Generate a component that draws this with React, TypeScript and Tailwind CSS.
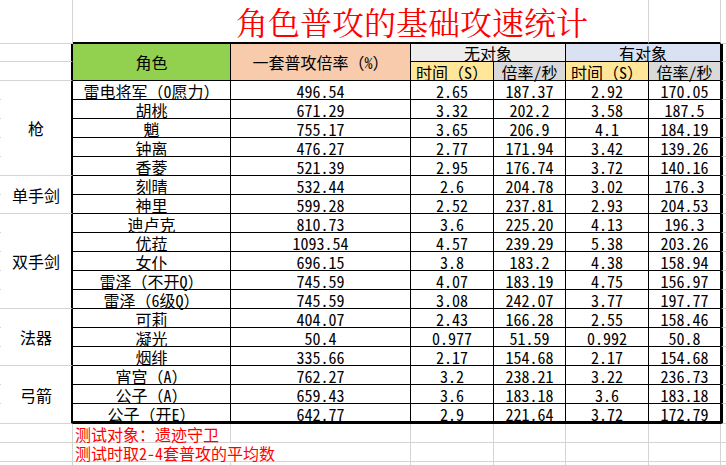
import React from "react";

const rows: string[][] = [
  ["雷电将军（0愿力）", "496.54", "2.65", "187.37", "2.92", "170.05"],
  ["胡桃", "671.29", "3.32", "202.2", "3.58", "187.5"],
  ["魈", "755.17", "3.65", "206.9", "4.1", "184.19"],
  ["钟离", "476.27", "2.77", "171.94", "3.42", "139.26"],
  ["香菱", "521.39", "2.95", "176.74", "3.72", "140.16"],
  ["刻晴", "532.44", "2.6", "204.78", "3.02", "176.3"],
  ["神里", "599.28", "2.52", "237.81", "2.93", "204.53"],
  ["迪卢克", "810.73", "3.6", "225.20", "4.13", "196.3"],
  ["优菈", "1093.54", "4.57", "239.29", "5.38", "203.26"],
  ["女仆", "696.15", "3.8", "183.2", "4.38", "158.94"],
  ["雷泽（不开Q）", "745.59", "4.07", "183.19", "4.75", "156.97"],
  ["雷泽（6级Q）", "745.59", "3.08", "242.07", "3.77", "197.77"],
  ["可莉", "404.07", "2.43", "166.28", "2.55", "158.46"],
  ["凝光", "50.4", "0.977", "51.59", "0.992", "50.8"],
  ["烟绯", "335.66", "2.17", "154.68", "2.17", "154.68"],
  ["宵宫（A）", "762.27", "3.2", "238.21", "3.22", "236.73"],
  ["公子（A）", "659.43", "3.6", "183.18", "3.6", "183.18"],
  ["公子（开E）", "642.77", "2.9", "221.64", "3.72", "172.79"],
];

const groups: Record<number, { label: string; span: string }> = {
  0: { label: "枪", span: "row-span-5" },
  5: { label: "单手剑", span: "row-span-2" },
  7: { label: "双手剑", span: "row-span-5" },
  12: { label: "法器", span: "row-span-3" },
  15: { label: "弓箭", span: "row-span-3" },
};

const gridA = "border-b border-[#d4d4d4]";
const textCell = "flex justify-center whitespace-nowrap leading-[18px] pt-[1px]";

export default function App() {
  return (
    <div className="w-[726px] h-[465px] overflow-hidden bg-white text-[16px] text-black font-['Noto_Sans_Mono_CJK_SC','Noto_Sans_CJK_SC','Noto_Sans_CJK_JP',sans-serif]">
      <div className="grid grid-cols-[1px_72px_158px_180px_83px_72px_83px_72px_5px] grid-rows-[44px_18px_19px_repeat(17,19px)_20px_19px_19px_19px]">
        {/* Row 1: title */}
        <div className={gridA} />
        <div className="border-r border-b border-[#d4d4d4]" />
        <div className="col-span-5 border-r border-r-[#d4d4d4] border-b-2 border-b-black flex items-center pl-[163px] whitespace-nowrap">
          <span className="font-['Noto_Serif_CJK_SC','Noto_Sans_CJK_SC',serif] text-[32px] leading-[32px] text-[#ff0000]">
            角色普攻的基础攻速统计
          </span>
        </div>
        <div className="border-r border-r-[#d4d4d4] border-b-2 border-b-black" />
        <div className={gridA} />

        {/* Row 2: header */}
        <div className={gridA} />
        <div className="border-r-2 border-r-black border-b border-b-[#d4d4d4]" />
        <div className="row-span-2 bg-[#92d050] border-r border-b border-black flex items-center justify-center leading-[18px] whitespace-nowrap">
          角色
        </div>
        <div className="row-span-2 bg-[#f8cbad] border-r border-b border-black flex items-center justify-center leading-[18px] whitespace-nowrap">
          一套普攻倍率（%）
        </div>
        <div className="col-span-2 bg-[#ededed] border-r border-b border-black flex justify-center leading-[17px] pt-[1px] whitespace-nowrap">
          无对象
        </div>
        <div className="col-span-2 bg-[#d9e1f2] border-r border-b border-black flex justify-center leading-[17px] pt-[1px] whitespace-nowrap">
          有对象
        </div>
        <div className="border-l-2 border-l-black border-b border-b-[#d4d4d4]" />

        {/* Row 3: sub header */}
        <div className={gridA} />
        <div className="border-r-2 border-r-black border-b border-b-[#d4d4d4]" />
        <div className={`${textCell} bg-[#ffe699] border-r border-b border-black`}>时间（S）</div>
        <div className={`${textCell} bg-[#d9d9d9] border-r border-b border-black`}>倍率/秒</div>
        <div className={`${textCell} bg-[#ffe699] border-r border-b border-black`}>时间（S）</div>
        <div className={`${textCell} bg-[#d9d9d9] border-r border-b border-black`}>倍率/秒</div>
        <div className="border-l-2 border-l-black border-b border-b-[#d4d4d4]" />

        {/* Data rows */}
        {rows.map((r, i) => {
          const last = i === rows.length - 1;
          const cellBorder = last
            ? "border-r border-r-black border-b-[3px] border-b-black"
            : "border-r border-b border-black";
          const g = groups[i];
          return (
            <React.Fragment key={i}>
              <div className={gridA} />
              {g && (
                <div
                  className={`${g.span} border-r-2 border-r-black border-b border-b-[#d4d4d4] flex items-center justify-center leading-[18px] whitespace-nowrap`}
                >
                  {g.label}
                </div>
              )}
              {r.map((v, j) => (
                <div key={j} className={`${textCell} ${cellBorder}`}>
                  {v}
                </div>
              ))}
              <div className="border-l-2 border-l-black border-b border-b-[#d4d4d4]" />
            </React.Fragment>
          );
        })}

        {/* Note row 1 */}
        <div className={gridA} />
        <div className="border-r border-b border-[#d4d4d4]" />
        <div className="border-r border-b border-[#d4d4d4] flex leading-[18px] pt-[1px] pl-[2px] whitespace-nowrap text-[#ff0000]">
          测试对象：遗迹守卫
        </div>
        <div className="border-r border-b border-[#d4d4d4]" />
        <div className="border-r border-b border-[#d4d4d4]" />
        <div className="border-r border-b border-[#d4d4d4]" />
        <div className="border-r border-b border-[#d4d4d4]" />
        <div className="border-r border-b border-[#d4d4d4]" />
        <div className={gridA} />

        {/* Note row 2 */}
        <div className={gridA} />
        <div className="border-r border-b border-[#d4d4d4]" />
        <div className="col-span-2 border-r border-b border-[#d4d4d4] flex leading-[18px] pt-[1px] pl-[2px] whitespace-nowrap text-[#ff0000]">
          测试时取2-4套普攻的平均数
        </div>
        <div className="border-r border-b border-[#d4d4d4]" />
        <div className="border-r border-b border-[#d4d4d4]" />
        <div className="border-r border-b border-[#d4d4d4]" />
        <div className="border-r border-b border-[#d4d4d4]" />
        <div className={gridA} />

        {/* Empty row */}
        <div className={gridA} />
        <div className="border-r border-b border-[#d4d4d4]" />
        <div className="border-r border-b border-[#d4d4d4]" />
        <div className="border-r border-b border-[#d4d4d4]" />
        <div className="border-r border-b border-[#d4d4d4]" />
        <div className="border-r border-b border-[#d4d4d4]" />
        <div className="border-r border-b border-[#d4d4d4]" />
        <div className="border-r border-b border-[#d4d4d4]" />
        <div className={gridA} />
      </div>
    </div>
  );
}
